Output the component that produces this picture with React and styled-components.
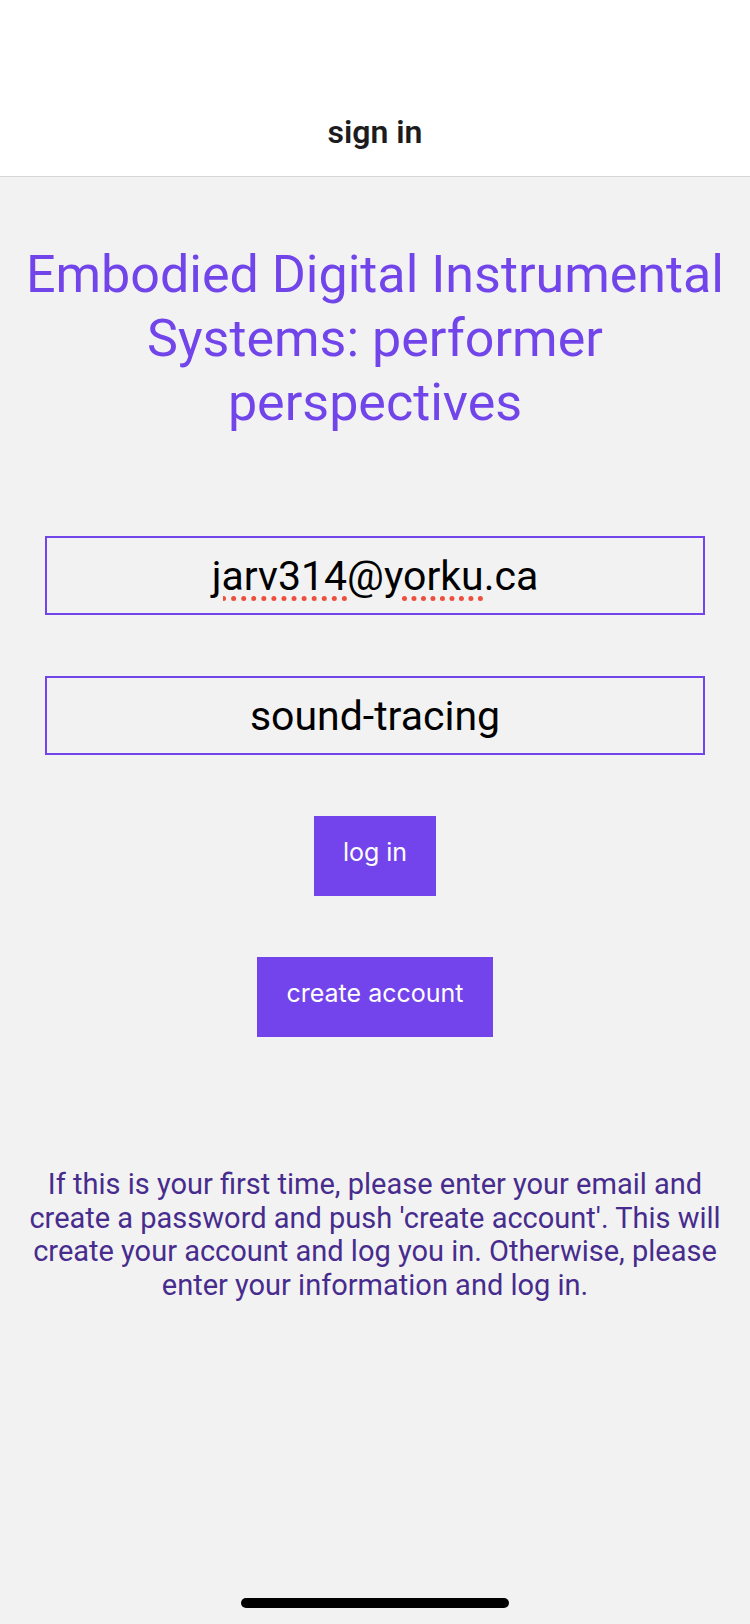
import React from "react";
import styled, { createGlobalStyle } from "styled-components";

const GlobalStyle = createGlobalStyle`
  html, body {
    margin: 0;
    padding: 0;
    background: #f2f2f2;
  }
  * {
    box-sizing: border-box;
  }
`;

const Page = styled.div`
  display: flex;
  flex-direction: column;
  min-height: 100vh;
  background: #f2f2f2;
  font-family: Roboto, "Liberation Sans", sans-serif;
`;

const NavBar = styled.header`
  display: flex;
  justify-content: center;
  align-items: flex-end;
  height: 177px;
  padding-bottom: 26px;
  background: #ffffff;
  border-bottom: 1px solid #d6d6d6;
`;

const NavTitle = styled.h2`
  margin: 0;
  font-size: 32px;
  line-height: 36px;
  font-weight: 600;
  color: #1c1c1e;
`;

const Main = styled.main`
  display: flex;
  flex-direction: column;
  align-items: center;
  padding: 66px 10px 0;
`;

const Title = styled.h1`
  margin: 0;
  font-size: 52px;
  line-height: 64px;
  font-weight: 400;
  text-align: center;
  color: #7145ea;
`;

const Form = styled.form`
  display: flex;
  flex-direction: column;
  align-items: center;
  gap: 61px;
  margin-top: 101px;
  width: 100%;
`;

const Field = styled.div`
  display: flex;
  align-items: center;
  justify-content: center;
  width: 660px;
  height: 79px;
  border: 2px solid #7145ea;
  font-size: 41px;
  color: #000;
  white-space: nowrap;
`;

const Misspelled = styled.span`
  text-decoration: underline dotted #ee4e3c;
  text-decoration-thickness: 5px;
  text-underline-offset: 6px;
`;

const Button = styled.button`
  height: 80px;
  padding: 0 29px 8px;
  border: none;
  border-radius: 0;
  background: #7344eb;
  color: #ffffff;
  font-family: Inter, "Liberation Sans", sans-serif;
  font-size: 25px;
  cursor: pointer;
`;

const Help = styled.p`
  margin: 131px 0 0;
  padding: 0 6px;
  font-size: 29px;
  line-height: 33.5px;
  text-align: center;
  color: #472c8e;
`;

const HomeBar = styled.div`
  align-self: center;
  width: 268px;
  height: 10px;
  margin-top: auto;
  margin-bottom: 16px;
  border-radius: 5px;
  background: #000;
`;

export default function App() {
  return (
    <>
      <GlobalStyle />
      <Page>
        <NavBar>
          <NavTitle>sign in</NavTitle>
        </NavBar>
        <Main>
          <Title>Embodied Digital Instrumental Systems: performer perspectives</Title>
          <Form onSubmit={(e) => e.preventDefault()}>
            <Field>
              <Misspelled>jarv314</Misspelled>@<Misspelled>yorku</Misspelled>.ca
            </Field>
            <Field>sound-tracing</Field>
            <Button type="button">log in</Button>
            <Button type="button">create account</Button>
          </Form>
          <Help>
            If this is your first time, please enter your email and create a password and push
            'create account'. This will create your account and log you in. Otherwise, please enter
            your information and log in.
          </Help>
        </Main>
        <HomeBar />
      </Page>
    </>
  );
}
